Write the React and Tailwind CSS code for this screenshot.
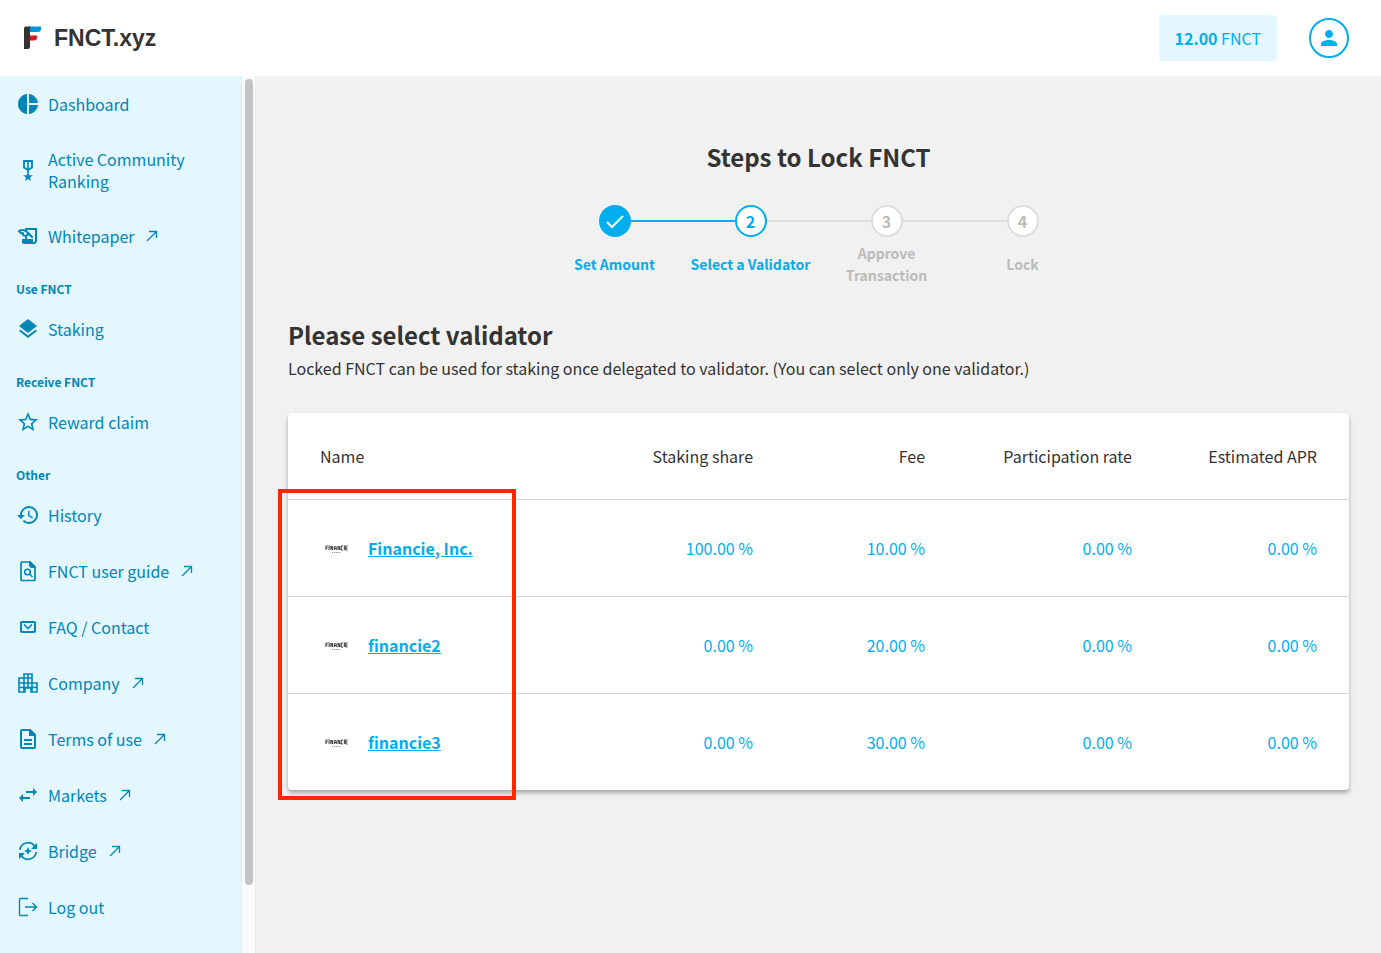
import React from 'react';
import {
  MdPieChart,
  MdOutlineHistoryEdu,
  MdLayers,
  MdStarBorder,
  MdHistory,
  MdPerson,
} from 'react-icons/md';

const Svg = ({ children }) => (
  <svg viewBox="0 0 24 24" className="h-6 w-6 shrink-0" fill="none" stroke="currentColor" strokeWidth="2" aria-hidden="true">
    {children}
  </svg>
);

const MedalIcon = () => (
  <Svg>
    <path d="M8 3h8v6.500l-4 2.500-4-2.500z" strokeWidth="1.800" />
    <path d="M12 3v12" strokeWidth="1.600" />
    <path d="M12 13.500l1.300 3.700H17l-3 2.300 1.100 3.500L12 20.900 8.900 23l1.100-3.500-3-2.300h3.700z" fill="currentColor" stroke="none" />
  </Svg>
);

const GuideIcon = () => (
  <Svg>
    <path d="M5 3h9l5 5v12.500a1 1 0 0 1-1 1H6a1 1 0 0 1-1-1V4a1 1 0 0 1 1-1z" strokeWidth="1.700" />
    <path d="M13 2h1l6 6v1h-5l-2-2z" fill="currentColor" stroke="none" />
    <circle cx="11.500" cy="13" r="2.800" strokeWidth="1.600" />
    <path d="M13.500 15l3 3" strokeWidth="1.600" />
  </Svg>
);

const MailIcon = () => (
  <Svg>
    <rect x="5" y="7" width="14" height="10" rx="1" />
    <path d="M8 9.500l4 4 4-4" strokeWidth="1.600" />
  </Svg>
);

const CompanyIcon = () => (
  <Svg>
    <path
      d="M3 21V7h5V3h8v9h5v9h-6v-4h-6v4zM3 12h13M3 16.500h18M8 7h8M8 7v14M12 3v14M16 12v9"
      strokeWidth="1.600"
    />
  </Svg>
);

const TermsIcon = () => (
  <Svg>
    <path d="M14 3H6a1 1 0 0 0-1 1v16a1 1 0 0 0 1 1h12a1 1 0 0 0 1-1V8z" />
    <path d="M13 2h1l6 6v1h-7z" fill="currentColor" stroke="none" />
    <path d="M8 13h8M8 17h8" />
  </Svg>
);

const MarketsIcon = () => (
  <Svg>
    <path d="M10 9h8M14 15H6" />
    <path d="M17 5l4 4-4 4zM7 11l-4 4 4 4z" fill="currentColor" stroke="none" />
  </Svg>
);

const BridgeIcon = () => (
  <Svg>
    <path d="M3.800 11a8.200 8.200 0 0 1 15-3.500M20.200 13a8.200 8.200 0 0 1-15 3.500" strokeWidth="1.700" />
    <path d="M21 4v6h-6zM3 20v-6h6z" fill="currentColor" stroke="none" />
    <path d="M12 8l1.200 2.800L16 12l-2.800 1.200L12 16l-1.200-2.800L8 12l2.800-1.200z" fill="currentColor" stroke="none" />
  </Svg>
);

const LogoutIcon = () => (
  <Svg>
    <path d="M12 3.500H4.500a1 1 0 0 0-1 1v15a1 1 0 0 0 1 1H12M9 12h11M16.500 8l4 4-4 4" strokeWidth="1.400" />
  </Svg>
);

const ExternalArrow = () => (
  <svg viewBox="0 0 12 12" className="h-3 w-3" fill="none" stroke="currentColor" strokeWidth="1.300" aria-hidden="true">
    <path d="M1 11L10.500 1.500M3 1.500h7.500V8" />
  </svg>
);

const sections = [
  {
    items: [
      { label: 'Dashboard', icon: MdPieChart },
      { label: 'Active Community Ranking', icon: MedalIcon },
      { label: 'Whitepaper', icon: MdOutlineHistoryEdu, external: true },
    ],
  },
  { title: 'Use FNCT', items: [{ label: 'Staking', icon: MdLayers }] },
  { title: 'Receive FNCT', items: [{ label: 'Reward claim', icon: MdStarBorder }] },
  {
    title: 'Other',
    items: [
      { label: 'History', icon: MdHistory },
      { label: 'FNCT user guide', icon: GuideIcon, external: true },
      { label: 'FAQ / Contact', icon: MailIcon },
      { label: 'Company', icon: CompanyIcon, external: true },
      { label: 'Terms of use', icon: TermsIcon, external: true },
      { label: 'Markets', icon: MarketsIcon, external: true },
      { label: 'Bridge', icon: BridgeIcon, external: true },
      { label: 'Log out', icon: LogoutIcon },
    ],
  },
];

const steps = [
  { label: 'Set Amount', state: 'done' },
  { label: 'Select a Validator', state: 'current' },
  { label: 'Approve Transaction', state: 'todo' },
  { label: 'Lock', state: 'todo' },
];

const validators = [
  { name: 'Financie, Inc.', share: '100.00 %', fee: '10.00 %', rate: '0.00 %', apr: '0.00 %' },
  { name: 'financie2', share: '0.00 %', fee: '20.00 %', rate: '0.00 %', apr: '0.00 %' },
  { name: 'financie3', share: '0.00 %', fee: '30.00 %', rate: '0.00 %', apr: '0.00 %' },
];

const Header = () => (
  <header className="flex h-19 items-center justify-between bg-white px-6 pr-8">
    <a href="#" className="flex items-center gap-3 text-[#333]">
      <svg viewBox="0 0 18 24" className="h-6 w-[18px]" aria-hidden="true">
        <path d="M5 0.500h12v2.500q0 3-3 3H5z" fill="#0095d9" />
        <path d="M5 9.500h8v2q0 3-3 3H5z" fill="#d7191f" />
        <path d="M2 0.500h5q-1 0-1 2V21q0 2-2 2H0V2.500q0-2 2-2z" fill="#333" />
      </svg>
      <span className="font-['Liberation_Sans',sans-serif] text-[23px] font-bold leading-6">FNCT.xyz</span>
    </a>
    <div className="flex items-center gap-8 text-[#00aeef]">
      <div className="rounded-sm bg-[#e5f7fe] px-4 py-3 leading-[22px]">
        <b>12.00</b> FNCT
      </div>
      <button type="button" aria-label="Account" className="flex h-10 w-10 items-center justify-center rounded-full border-2 border-[#00aeef]">
        <MdPerson className="h-6 w-6" />
      </button>
    </div>
  </header>
);

const Sidebar = () => (
  <nav className="w-[242px] shrink-0 border-r border-[#e4e8ea] bg-[#e5f7fe] text-[#0086b7]">
    {sections.map((section, i) => (
      <div key={i}>
        {section.title && <h3 className="h-[37px] px-4 pt-4 text-[12px] font-bold leading-[18px]">{section.title}</h3>}
        {section.items.map(({ label, icon: Icon, external }) => (
          <a key={label} href="#" className="flex min-h-14 items-center gap-2 px-4 py-4 leading-[22px]">
            <Icon className="h-6 w-6 shrink-0" />
            <span>{label}</span>
            {external && <span className="pl-1"><ExternalArrow /></span>}
          </a>
        ))}
      </div>
    ))}
  </nav>
);

const circleStyles = {
  done: 'border-[#00aeef] bg-[#00aeef] text-white',
  current: 'border-[#00aeef] bg-white text-[#00aeef]',
  todo: 'border-[#ddd] bg-white text-[#bbb]',
};

const Stepper = () => (
  <ol className="mx-auto grid w-[544px] max-w-full grid-cols-4">
    {steps.map((step, i) => (
      <li key={step.label} className="flex flex-col items-center text-center font-bold">
        <div className="flex w-full items-center">
          <span className={`h-0.5 flex-1 ${i === 0 ? 'bg-transparent' : i === 1 ? 'bg-[#00aeef]' : 'bg-[#ddd]'}`} />
          <span className={`flex h-8 w-8 items-center justify-center rounded-full border-2 ${circleStyles[step.state]}`}>
            {step.state === 'done' ? (
              <svg viewBox="0 0 20 20" className="h-5 w-5" fill="none" stroke="currentColor" strokeWidth="2" aria-label="Done">
                <path d="M2 11l5 5L18 5" />
              </svg>
            ) : (
              i + 1
            )}
          </span>
          <span className={`h-0.5 flex-1 ${i === 3 ? 'bg-transparent' : i === 0 ? 'bg-[#00aeef]' : 'bg-[#ddd]'}`} />
        </div>
        <div className={`mt-1 flex h-[46px] items-center px-1 text-[14px] leading-[22px] ${step.state === 'todo' ? 'text-[#bbb]' : 'text-[#00aeef]'}`}>
          {step.label}
        </div>
      </li>
    ))}
  </ol>
);

const FinancieLogo = () => (
  <svg viewBox="0 0 32 32" className="h-8 w-8" fill="none" stroke="#333" strokeWidth="1" aria-hidden="true">
    <g transform="translate(0.500 0) scale(0.900 1)">
      <path d="M6 18v-4h2M6 16h2M9.500 14v4M11.500 18v-4l2 4v-4M15.500 18v-3l1-1 1 1v3M15.500 16.500h2M19.500 18v-4l2 4v-4M25 14h-2v4h2M26.500 14v4M30 14h-2v4h2M28 16h2" />
      <path d="M13 20.500h9" strokeDasharray="1 1" strokeWidth="0.700" />
      <path d="M9 13.500h1" stroke="#e33" />
      <path d="M26 13.500h1" stroke="#0095d9" />
    </g>
  </svg>
);

const ValidatorTable = () => (
  <div className="relative rounded bg-white shadow-[0_3px_4px_rgba(0,0,0,0.300)]">
    <table className="w-full">
      <thead>
        <tr className="h-[86px] text-right">
          <th className="px-8 text-left font-normal">Name</th>
          <th className="w-[172px] px-8 font-normal whitespace-nowrap">Staking share</th>
          <th className="w-[172px] px-8 font-normal">Fee</th>
          <th className="w-[207px] px-8 font-normal whitespace-nowrap">Participation rate</th>
          <th className="w-[185px] px-8 font-normal whitespace-nowrap">Estimated APR</th>
        </tr>
      </thead>
      <tbody>
        {validators.map((v) => (
          <tr key={v.name} className="h-[97px] border-t border-[#d5d5d5] text-right text-[#00aeef]">
            <td className="px-8">
              <div className="flex items-center gap-4">
                <FinancieLogo />
                <a href="#" className="font-bold underline">{v.name}</a>
              </div>
            </td>
            <td className="px-8">{v.share}</td>
            <td className="px-8">{v.fee}</td>
            <td className="px-8">{v.rate}</td>
            <td className="px-8">{v.apr}</td>
          </tr>
        ))}
      </tbody>
    </table>
    {/* Highlight around the validator names */}
    <div className="pointer-events-none absolute -bottom-2.5 -left-2.5 top-19 w-[238px] border-4 border-[#ff2600]" />
  </div>
);

export default function App() {
  return (
    <div className="flex min-h-screen flex-col bg-[#f1f1f1] font-['Noto_Sans_CJK_JP',sans-serif] text-[16px] text-[#333]">
      <Header />
      <div className="flex flex-1">
        <Sidebar />
        <div className="w-3.5 shrink-0 border-r border-[#ececec] bg-[#fafafa] pt-[3px]">
          <div className="mx-auto h-[806px] w-2 rounded-full bg-[#c4c4c4]" />
        </div>
        <main className="min-w-0 flex-1 px-8 pt-16">
          <h1 className="text-center text-[24px] font-bold leading-[33px]">Steps to Lock FNCT</h1>
          <div className="mt-8">
            <Stepper />
          </div>
          <h2 className="mt-8 text-[24px] font-bold leading-8">Please select validator</h2>
          <p className="mt-1 mb-8 leading-[26px]">
            Locked FNCT can be used for staking once delegated to validator. (You can select only one validator.)
          </p>
          <ValidatorTable />
        </main>
      </div>
    </div>
  );
}
